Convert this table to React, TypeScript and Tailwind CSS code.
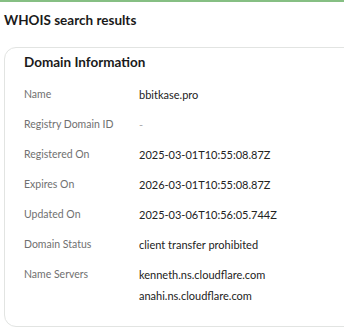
const ROWS: { label: string; value: string[] }[] = [
  { label: "Name", value: ["bbitkase.pro"] },
  { label: "Registry Domain ID", value: ["-"] },
  { label: "Registered On", value: ["2025-03-01T10:55:08.87Z"] },
  { label: "Expires On", value: ["2026-03-01T10:55:08.87Z"] },
  { label: "Updated On", value: ["2025-03-06T10:56:05.744Z"] },
  { label: "Domain Status", value: ["client transfer prohibited"] },
  { label: "Name Servers", value: ["kenneth.ns.cloudflare.com", "anahi.ns.cloudflare.com"] },
];

export default function App() {
  return (
    <div className="h-[330px] w-[344px] overflow-hidden bg-white font-['Lato',sans-serif]">
      <div className="h-[12px] bg-[#86bf83] pt-[2px]">
        <div className="h-[10px] rounded-tl-[10px] bg-white" />
      </div>
      <div className="-mt-[10px] h-[318px] bg-white pl-[4px]">
        <h1 className="pt-[8px] text-[13.5px] font-bold leading-[20px] text-[#1a1a1a]">
          WHOIS search results
        </h1>
        {/* card */}
        <div className="mt-[17px] h-[280px] w-[400px] rounded-[12px] border border-[#e2e4e2] px-[19px] pt-[4px]">
          <h2 className="text-[13.5px] font-bold leading-[20px] text-[#1a1a1a]">
            Domain Information
          </h2>
          <div className="mt-[12px] flex flex-col gap-[9px]">
            {ROWS.map((row) => (
              <div key={row.label} className="flex items-start leading-[21px]">
                <div className="w-[115px] shrink-0 text-[10.5px] text-[#707070]">{row.label}</div>
                <div className="flex flex-col text-[11px] text-[#222]">
                  {row.value.map((v) => (
                    <span key={v} className={v === "-" ? "text-[#aaa]" : ""}>
                      {v}
                    </span>
                  ))}
                </div>
              </div>
            ))}
          </div>
        </div>
      </div>
    </div>
  );
}
